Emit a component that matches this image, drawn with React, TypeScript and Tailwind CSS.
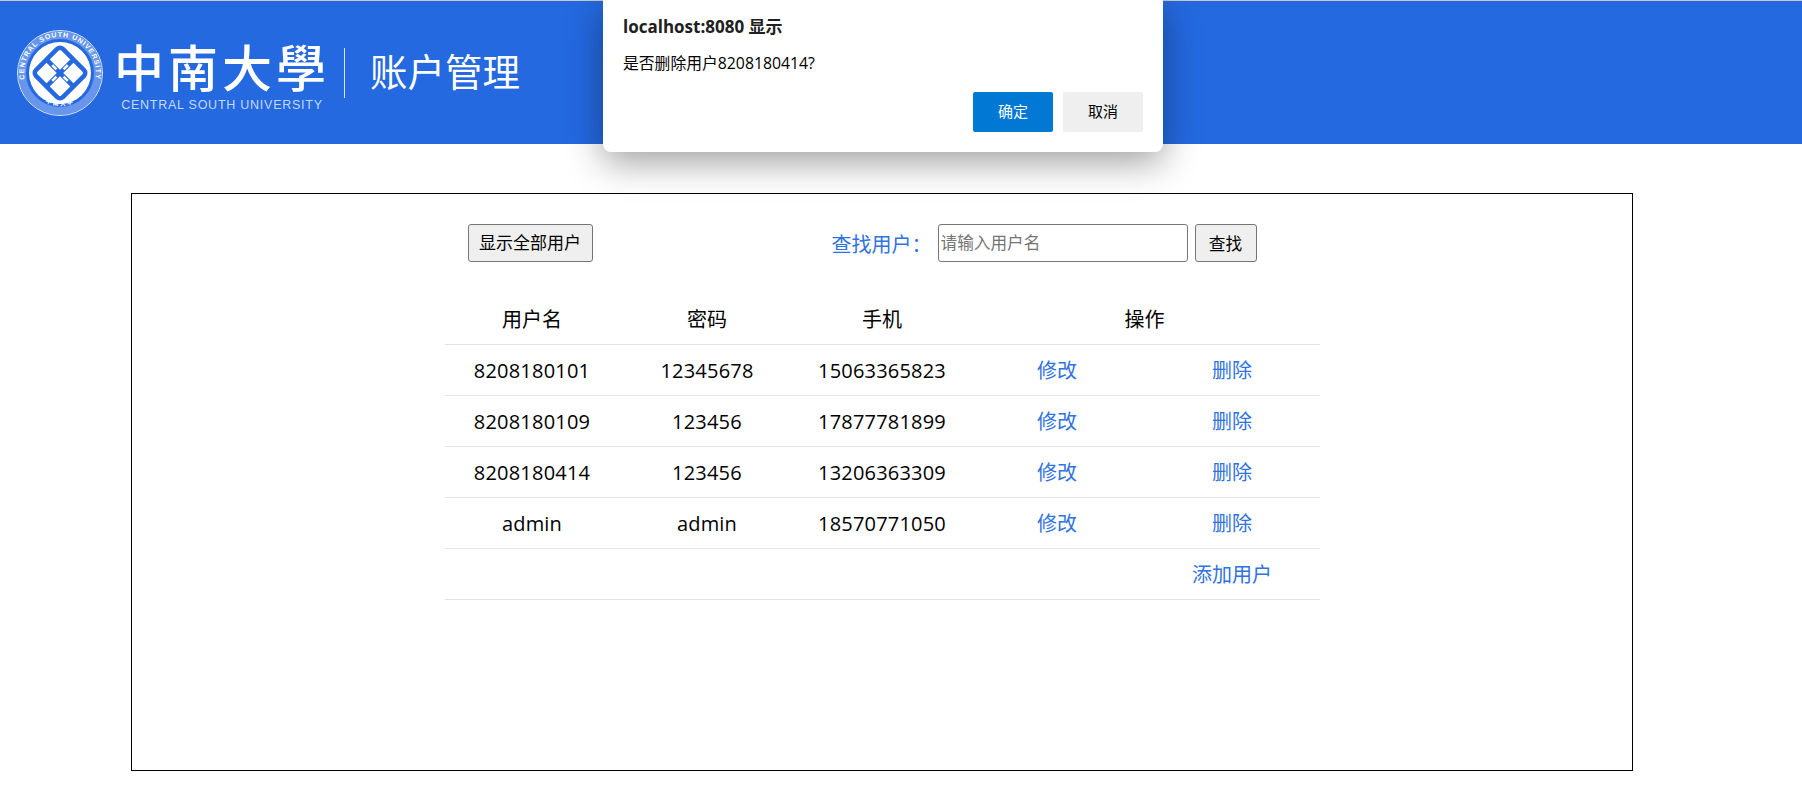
import React from 'react';

const rows = [
  ['8208180101', '12345678', '15063365823'],
  ['8208180109', '123456', '17877781899'],
  ['8208180414', '123456', '13206363309'],
  ['admin', 'admin', '18570771050'],
];

const font = 'font-["Open_Sans","Noto_Sans_CJK_SC",sans-serif]';

// school seal, the ring text stays real text on a path
function Seal() {
  return (
    <svg width="88" height="88" viewBox="0 0 88 88" className="shrink-0">
      <defs>
        <path id="seal-top" d="M 8.5 50 A 36 36 0 1 1 79.5 50" />
        <path id="seal-bottom" d="M 24 70 A 33 33 0 0 0 64 70" />
      </defs>
      <circle cx="44" cy="44" r="42.5" fill="none" stroke="#dbe6fa" strokeWidth="1" />
      <circle cx="44" cy="44" r="38" fill="none" stroke="#a9c4f3" strokeWidth="8" opacity="0.5" />
      <text fontFamily="Liberation Sans" fontSize="7" fontWeight="700" fill="#ffffff" letterSpacing="0.9">
        <textPath href="#seal-top" startOffset="50%" textAnchor="middle">CENTRAL SOUTH UNIVERSITY</textPath>
      </text>
      <text fontFamily="Noto Sans CJK TC" fontSize="6" fontWeight="700" fill="#ffffff" letterSpacing="1.5">
        <textPath href="#seal-bottom" startOffset="50%" textAnchor="middle">中南大學</textPath>
      </text>
      <circle cx="44" cy="44" r="31" fill="#ffffff" />
      <g transform="rotate(45 44 44)" fill="none" stroke="#2469e0" strokeWidth="4.5" strokeLinejoin="round">
        <rect x="25" y="25" width="38" height="38" rx="4" />
        <path d="M44 25 V63" />
        <path d="M25 44 H63" />
        <path d="M44 33 V39 M44 49 V55" stroke="#ffffff" strokeWidth="2.5" />
        <path d="M33 44 H39 M49 44 H55" stroke="#ffffff" strokeWidth="2.5" />
      </g>
    </svg>
  );
}

function Header() {
  return (
    <header className="flex h-[144px] items-center border-t border-[#c9c9c9] bg-[#2469e0] pl-4">
      <Seal />
      <div className="ml-[12px] flex w-[212px] flex-col items-center">
        <span className='h-[62px] font-["Noto_Sans_CJK_TC",sans-serif] text-[50px] leading-[62px] font-medium tracking-[4px] whitespace-nowrap text-white'>
          中南大學
        </span>
        <span className='mt-[2px] font-["Liberation_Sans",sans-serif] text-[12.5px] leading-[14px] tracking-[0.75px] whitespace-nowrap text-[#c6d8f6]'>
          CENTRAL SOUTH UNIVERSITY
        </span>
      </div>
      <div className="ml-[16px] h-[50px] w-px bg-[#dbe6fa]" />
      <h1 className="mb-[2px] ml-[25px] text-[37.5px] leading-[50px] font-normal text-white">账户管理</h1>
    </header>
  );
}

function Dialog() {
  return (
    <div className="absolute top-0 left-[603px] h-[152px] w-[560px] rounded-b-lg bg-white px-5 pt-[15px] shadow-[0_10px_36px_rgba(0,0,0,0.38)]">
      <p className="text-[17px] leading-[24px] font-bold text-[#202020]">localhost:8080 显示</p>
      <p className="mt-[13px] text-[15.8px] leading-[22px] text-black">是否删除用户8208180414?</p>
      <div className="mt-[18px] flex justify-end gap-[10px]">
        <button className="h-[40px] w-[80px] rounded-[2px] bg-[#0078d4] pb-px text-[15px] text-white">确定</button>
        <button className="h-[40px] w-[80px] rounded-[2px] bg-[#efefef] pb-px text-[15px] text-black">取消</button>
      </div>
    </div>
  );
}

export default function App() {
  return (
    <div className={`relative h-[790px] overflow-hidden bg-white ${font}`}>
      <Header />
      <main className="mt-[49px] ml-[131px] h-[578px] w-[1502px] border border-black pt-[30px]">
        <div className="mx-auto w-[875px]">
          <div className="flex h-[38px] items-stretch pl-[23px]">
            <button className="w-[125px] rounded-[3px] border border-[#767676] bg-[#efefef] text-[17px] text-black">
              显示全部用户
            </button>
            <label className="ml-[239px] h-[38px] w-[106px] text-[20px] leading-[42px] text-[#2f72e2]">查找用户：</label>
            <input
              placeholder="请输入用户名"
              className="w-[250px] rounded-[3px] border border-[#767676] px-[2px] pt-px text-[16.67px] placeholder:text-[#757575]"
            />
            <button className="ml-[7px] w-[62px] rounded-[3px] border border-[#767676] bg-[#efefef] text-[16.67px] text-black">
              查找
            </button>
          </div>

          <div className="mt-[32px] text-center text-[20px] leading-[52px] text-black">
            <div className="grid h-[51px] grid-cols-5 border-b border-[#e4e4e4]">
              <div>用户名</div>
              <div>密码</div>
              <div>手机</div>
              <div className="col-span-2">操作</div>
            </div>
            {rows.map((row) => (
              <div key={row[0]} className="grid h-[51px] grid-cols-5 border-b border-[#e4e4e4]">
                {row.map((cell) => (
                  <div key={cell} className="tracking-[0.2px]">{cell}</div>
                ))}
                <a className="text-[#2f72e2]">修改</a>
                <a className="text-[#2f72e2]">删除</a>
              </div>
            ))}
            <div className="grid h-[51px] grid-cols-5 border-b border-[#e4e4e4]">
              <a className="col-start-5 text-[#2f72e2]">添加用户</a>
            </div>
          </div>
        </div>
      </main>
      <Dialog />
    </div>
  );
}
